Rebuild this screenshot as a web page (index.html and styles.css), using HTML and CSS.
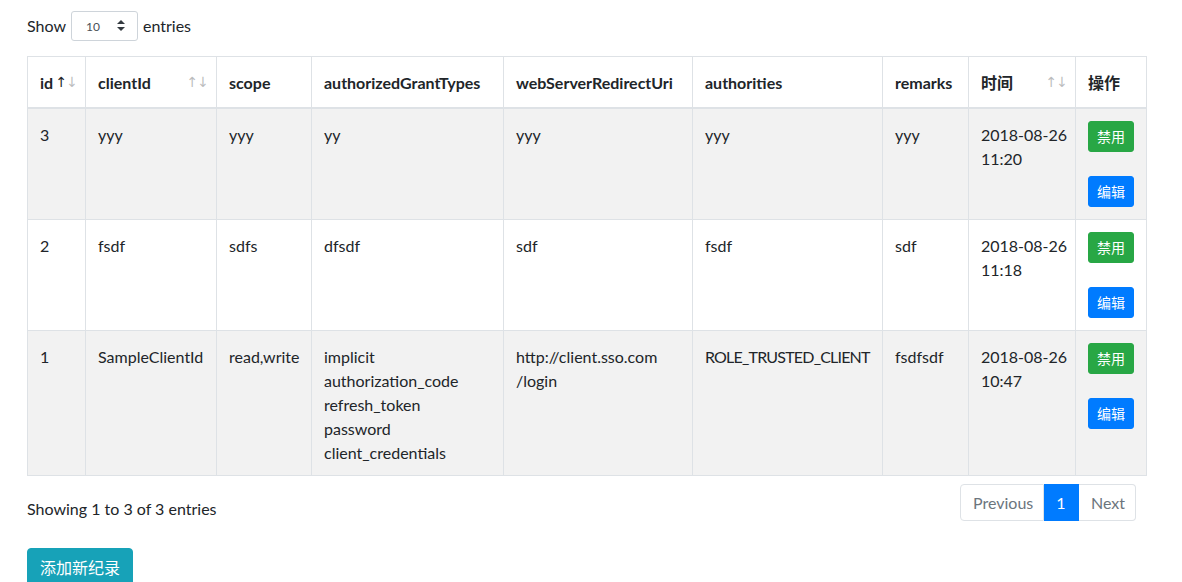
FILE: index.html
```html
<!DOCTYPE html>
<html lang="zh">
<head>
<meta charset="utf-8">
<title>Clients</title>
<link rel="stylesheet" href="styles.css">
</head>
<body>
<div class="page">
  <div class="length">
    <span>Show</span>
    <span class="select">
      <span class="select-val">10</span>
      <svg class="select-arrows" width="8" height="11" viewBox="0 0 8 11"><path d="M4 0 L8 4 L0 4 Z M4 11 L0 7 L8 7 Z" fill="#343a40"/></svg>
    </span>
    <span>entries</span>
  </div>

  <table class="grid">
    <colgroup>
      <col style="width:58px"><col style="width:131px"><col style="width:95px"><col style="width:192px"><col style="width:189px"><col style="width:190px"><col style="width:86px"><col style="width:107px"><col style="width:71px">
    </colgroup>
    <thead>
      <tr>
        <th class="sort asc">id<span class="arrows"><span class="up">↑</span><span class="down">↓</span></span></th>
        <th class="sort">clientId<span class="arrows"><span class="up">↑</span><span class="down">↓</span></span></th>
        <th>scope</th>
        <th>authorizedGrantTypes</th>
        <th>webServerRedirectUri</th>
        <th>authorities</th>
        <th>remarks</th>
        <th class="sort">时间<span class="arrows"><span class="up">↑</span><span class="down">↓</span></span></th>
        <th>操作</th>
      </tr>
    </thead>
    <tbody>
      <tr class="odd">
        <td>3</td><td>yyy</td><td>yyy</td><td>yy</td><td>yyy</td><td>yyy</td><td>yyy</td>
        <td>2018-08-26<br>11:20</td>
        <td><div class="ops"><button class="btn-sm green">禁用</button><button class="btn-sm blue">编辑</button></div></td>
      </tr>
      <tr>
        <td>2</td><td>fsdf</td><td>sdfs</td><td>dfsdf</td><td>sdf</td><td>fsdf</td><td>sdf</td>
        <td>2018-08-26<br>11:18</td>
        <td><div class="ops"><button class="btn-sm green">禁用</button><button class="btn-sm blue">编辑</button></div></td>
      </tr>
      <tr class="odd">
        <td>1</td><td>SampleClientId</td><td>read,write</td>
        <td>implicit<br>authorization_code<br>refresh_token<br>password<br>client_credentials</td>
        <td>http://client.sso.com<br>/login</td>
        <td class="tight">ROLE_TRUSTED_CLIENT</td>
        <td>fsdfsdf</td>
        <td>2018-08-26<br>10:47</td>
        <td><div class="ops"><button class="btn-sm green">禁用</button><button class="btn-sm blue">编辑</button></div></td>
      </tr>
    </tbody>
  </table>

  <div class="footer">
    <div class="info">Showing 1 to 3 of 3 entries</div>
    <ul class="pagination">
      <li class="pg disabled">Previous</li>
      <li class="pg active">1</li>
      <li class="pg disabled">Next</li>
    </ul>
  </div>

  <button class="btn-add">添加新纪录</button>
</div>
</body>
</html>
```

FILE: styles.css
```css
* { box-sizing: border-box; }
html, body { margin: 0; padding: 0; background: #fff; }
body {
  font-family: Lato, "Noto Sans CJK SC", sans-serif;
  font-size: 16px;
  line-height: 24px;
  color: #212529;
  overflow: hidden;
}
.page {
  padding: 10px 0 0 27px;
  width: 1146px;
}
.length {
  display: flex;
  align-items: center;
  gap: 5px;
  height: 31px;
}
.select {
  display: inline-flex;
  align-items: center;
  justify-content: space-between;
  width: 67px;
  height: 30px;
  border: 1px solid #ced4da;
  border-radius: 3px;
  padding: 0 12px 0 14px;
  font-size: 12px;
  color: #495057;
}
.select-val { line-height: 18px; padding-top: 2px; }
.grid {
  margin-top: 15px;
  width: 1119px;
  border-collapse: collapse;
  table-layout: fixed;
}
.grid th, .grid td {
  border: 1px solid #dee2e6;
  padding: 14px 12px 10px;
  text-align: left;
  vertical-align: top;
}
.grid th {
  font-weight: bold;
  border-bottom: 2px solid #dee2e6;
  padding-bottom: 12px;
  vertical-align: bottom;
  white-space: nowrap;
  position: relative;
}
.grid td { white-space: nowrap; }
.grid td.tight { letter-spacing: -0.8px; }
.grid tr.odd td { background: #f2f2f2; }
.arrows {
  position: absolute;
  right: 8px;
  top: 18px;
  font-family: "DejaVu Sans", sans-serif;
  font-weight: normal;
  font-size: 14px;
  line-height: 15px;
  letter-spacing: -1px;
}
.arrows span { opacity: 0.3; }
.asc .arrows .up { opacity: 1; color: #212529; }
.ops {
  display: flex;
  flex-direction: column;
  align-items: flex-start;
  gap: 24px;
  margin: -2px 0 2px;
}
.btn-sm {
  font-family: "Noto Sans CJK SC", sans-serif;
  font-size: 14px;
  line-height: 21px;
  padding: 4px 8px;
  height: 31px;
  width: 46px;
  border-radius: 3px;
  border: 1px solid transparent;
  color: #fff;
}
.green { background: #28a745; border-color: #28a745; }
.blue { background: #007bff; border-color: #007bff; }
.footer {
  display: flex;
  justify-content: space-between;
  align-items: flex-start;
  margin-top: 8px;
  padding-right: 10px;
}
.info { padding-top: 13px; }
.pagination {
  display: flex;
  list-style: none;
  margin: 0;
  padding: 0;
}
.pg {
  border: 1px solid #dee2e6;
  padding: 6px 12px;
  line-height: 24px;
  height: 37px;
  color: #6c757d;
}
.pg:first-child { border-radius: 4px 0 0 4px; width: 84px; text-align: center; }
.pg:last-child { border-radius: 0 4px 4px 0; border-left: none; width: 57px; text-align: center; }
.pg.active { background: #007bff; border-color: #007bff; color: #fff; width: 35px; text-align: center; border-left: none; }
.btn-add {
  margin-top: 27px;
  font-family: "Noto Sans CJK SC", sans-serif;
  font-size: 16px;
  line-height: 24px;
  padding: 6px 12px;
  width: 106px;
  height: 38px;
  border: 1px solid #17a2b8;
  border-radius: 4px;
  background: #17a2b8;
  color: #fff;
}
```
